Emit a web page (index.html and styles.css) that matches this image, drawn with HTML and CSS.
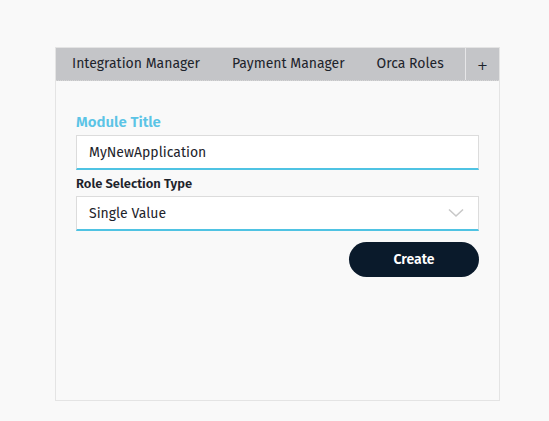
FILE: index.html
```html
<!DOCTYPE html>
<html>
<head>
<meta charset="utf-8">
<link rel="stylesheet" href="styles.css">
</head>
<body>
<div class="panel">
  <div class="tabs">
    <div class="tab">Integration Manager</div>
    <div class="tab">Payment Manager</div>
    <div class="tab">Orca Roles</div>
    <div class="tab plus">+</div>
  </div>
  <div class="content">
    <label class="title-label">Module Title</label>
    <div class="field">MyNewApplication</div>
    <label class="sub-label">Role Selection Type</label>
    <div class="field select">
      <span>Single Value</span>
      <svg class="chev" width="16" height="10" viewBox="0 0 16 10"><path d="M1 1.5 L8 8 L15 1.5" fill="none" stroke="#c8c8c8" stroke-width="1.6"/></svg>
    </div>
    <div class="actions"><button class="btn">Create</button></div>
  </div>
</div>
</body>
</html>
```
FILE: styles.css
```css
html, body { margin: 0; padding: 0; }
body {
  background: #f9f9f9;
  font-family: "Fira Sans", Lato, "Open Sans", sans-serif;
  width: 549px; height: 421px;
  padding-top: 47px;
  box-sizing: border-box;
}
.panel {
  margin-left: 55px;
  width: 445px;
  height: 354px;
  box-sizing: border-box;
  border: 1px solid #e4e4e4;
  background: #f9f9f9;
}
.tabs {
  display: flex;
  height: 32px;
  background: #c4c5c8;
  border-bottom: 1px dotted #d6d6d6;
  align-items: stretch;
}
.tab {
  display: flex; align-items: center;
  padding: 0 16px 2px;
  font-size: 14px;
  color: #1d232b;
}
.tab.plus {
  margin-left: auto;
  width: 33px; padding: 3px 0 0; justify-content: center;
  border-left: 1px solid #e6e6e8;
  font-family: "DejaVu Sans", sans-serif;
  font-size: 13px;
  font-weight: 400;
}
.content {
  padding: 32px 20px 0 20px;
  display: flex; flex-direction: column;
}
.title-label {
  color: #5bc4e6;
  font-size: 15px;
  font-weight: 600;
  margin-bottom: 4px;
}
.field {
  height: 35px;
  box-sizing: border-box;
  background: #fff;
  border: 1px solid #dcdcdc;
  border-bottom: 2px solid #4fc3e3;
  padding: 0 12px;
  display: flex; align-items: center;
  font-size: 14px;
  color: #1d232b;
}
.sub-label {
  font-size: 13px;
  font-weight: 600;
  color: #1d232b;
  margin: 6px 0 5px;
}
.select { justify-content: space-between; }
.chev { margin-right: 2px; }
.actions { display: flex; justify-content: flex-end; margin-top: 11px; }
.btn {
  width: 130px; height: 35px;
  border: none; border-radius: 18px;
  background: #0a1a2b;
  color: #fff;
  font-family: inherit;
  font-size: 14px;
  font-weight: 600;
}
```
